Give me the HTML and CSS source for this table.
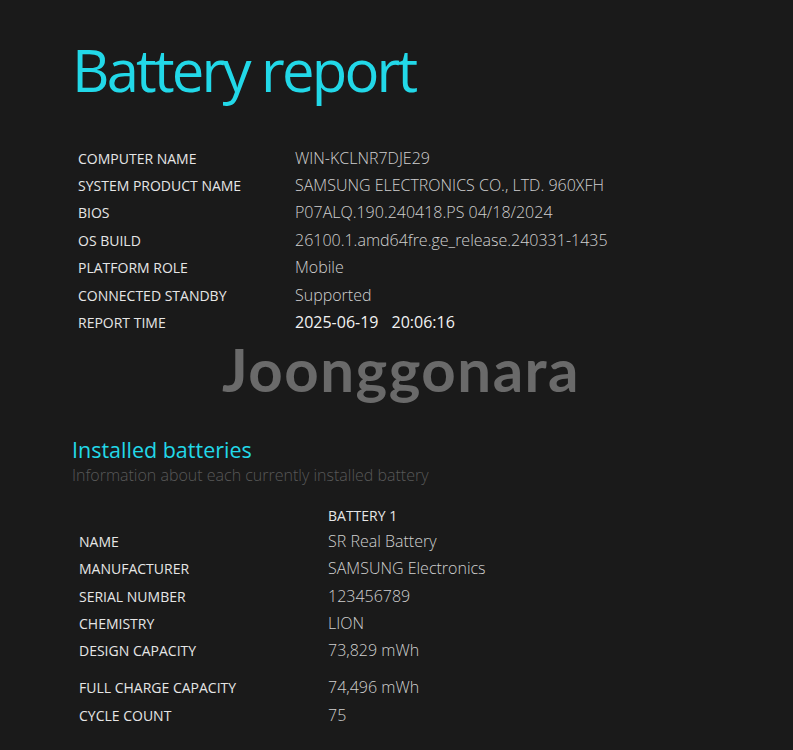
FILE: index.html
```html
<!DOCTYPE html>
<html>
<head>
<meta charset="utf-8">
<link rel="stylesheet" href="styles.css">
</head>
<body>
<main class="page">
  <h1 class="title">Battery report</h1>
  <table class="info">
    <tr><td class="label">COMPUTER NAME</td><td class="value">WIN-KCLNR7DJE29</td></tr>
    <tr><td class="label">SYSTEM PRODUCT NAME</td><td class="value">SAMSUNG ELECTRONICS CO., LTD. 960XFH</td></tr>
    <tr><td class="label">BIOS</td><td class="value">P07ALQ.190.240418.PS 04/18/2024</td></tr>
    <tr><td class="label">OS BUILD</td><td class="value">26100.1.amd64fre.ge_release.240331-1435</td></tr>
    <tr><td class="label">PLATFORM ROLE</td><td class="value">Mobile</td></tr>
    <tr><td class="label">CONNECTED STANDBY</td><td class="value">Supported</td></tr>
    <tr><td class="label">REPORT TIME</td><td class="value strong">2025-06-19<span class="time">20:06:16</span></td></tr>
  </table>
  <div class="watermark">Joonggonara</div>
  <h2 class="section">Installed batteries</h2>
  <p class="desc">Information about each currently installed battery</p>
  <table class="battery">
    <tr class="headrow"><td class="label"></td><td class="head">BATTERY 1</td></tr>
    <tr><td class="label">NAME</td><td class="value">SR Real Battery</td></tr>
    <tr><td class="label">MANUFACTURER</td><td class="value">SAMSUNG Electronics</td></tr>
    <tr><td class="label">SERIAL NUMBER</td><td class="value">123456789</td></tr>
    <tr><td class="label">CHEMISTRY</td><td class="value">LION</td></tr>
    <tr class="gap"><td class="label">DESIGN CAPACITY</td><td class="value">73,829 mWh</td></tr>
    <tr><td class="label">FULL CHARGE CAPACITY</td><td class="value">74,496 mWh</td></tr>
    <tr><td class="label">CYCLE COUNT</td><td class="value">75</td></tr>
  </table>
</main>
</body>
</html>
```
FILE: styles.css
```css
html, body {
  margin: 0;
  background: #1a1a1a;
  color: #d8d8d8;
  font-family: "Open Sans", "Noto Sans", sans-serif;
}
.page {
  padding: 30px 0 0 72px;
}
.title {
  margin: 0;
  font-size: 58px;
  font-weight: 400;
  color: #22d8e8;
  line-height: 80px;
  letter-spacing: -2.8px;
}
.info, .battery {
  border-collapse: collapse;
  margin-left: 6px;
}
.info {
  margin-top: 34.5px;
}
.info td, .battery td {
  padding: 0;
  height: 27.4px;
  line-height: 27.4px;
  vertical-align: top;
}
.label {
  font-size: 14px;
  color: #e6e6e6;
  width: 217px;
}
.value {
  font-size: 16px;
  font-weight: 300;
  color: #d0d0d0;
}
.value.strong {
  font-weight: 400;
  color: #f2f2f2;
}
.time {
  margin-left: 13px;
}
.watermark {
  margin: -2px 0 0 150px;
  font-family: "Lato", sans-serif;
  font-weight: 700;
  font-size: 60px;
  line-height: 70px;
  letter-spacing: 1.5px;
  color: #6a6a6a;
}
.section {
  margin: 31px 0 0;
  font-size: 21.5px;
  font-weight: 400;
  color: #22d8e8;
  line-height: 29px;
}
.desc {
  margin: 0;
  font-size: 16px;
  font-weight: 300;
  color: #585858;
  line-height: 22px;
}
.battery {
  margin-top: 18px;
  margin-left: 7px;
}
.battery .label {
  width: 249px;
}
.battery tr.headrow td {
  height: 23.4px;
  line-height: 23.4px;
}
.head {
  font-size: 14px;
  color: #e6e6e6;
}
.battery tr.gap td {
  padding-bottom: 9.6px;
}
```
